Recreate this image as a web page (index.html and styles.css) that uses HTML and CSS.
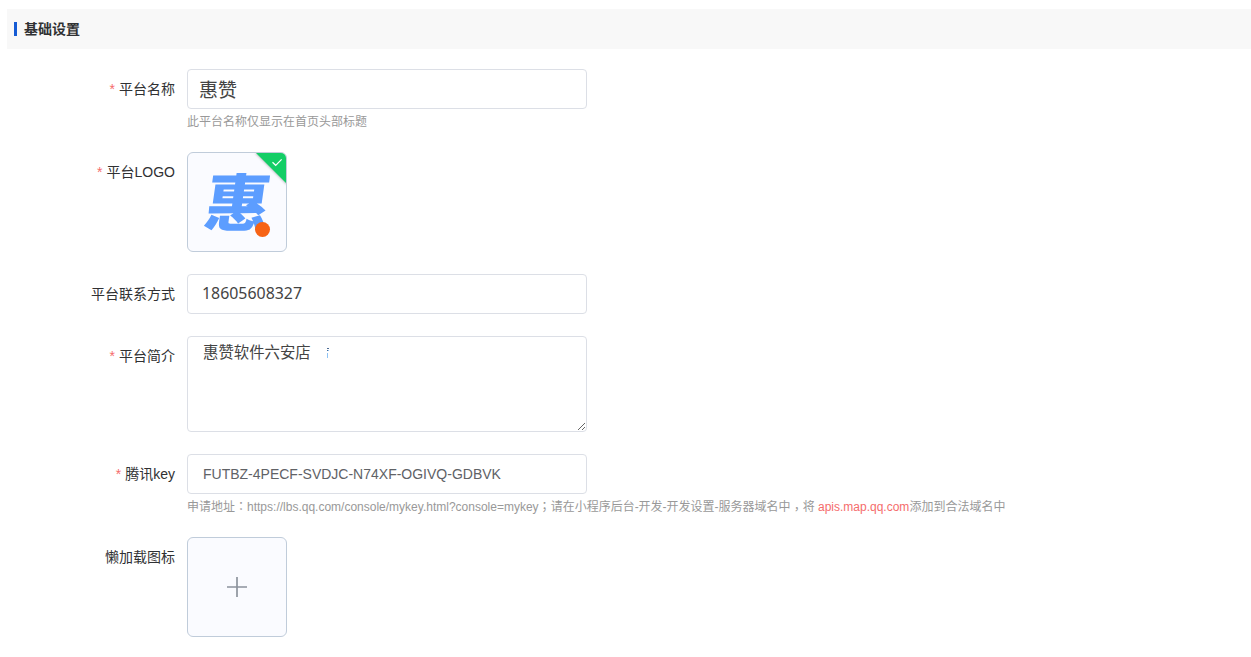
FILE: index.html
```html
<!DOCTYPE html>
<html lang="zh-CN">
<head>
    <meta charset="UTF-8">
    <meta name="viewport" content="width=device-width, initial-scale=1.0">
    <title>基础设置</title>
    <link rel="stylesheet" href="styles.css">
</head>
<body>
    <div class="section-title">基础设置</div>

    <form class="form">
        <div class="form-item required">
            <label class="label" for="name">平台名称</label>
            <div class="content">
                <input class="input input-name" id="name" type="text" value="惠赞">
                <div class="tip">此平台名称仅显示在首页头部标题</div>
            </div>
        </div>

        <div class="form-item required">
            <span class="label">平台LOGO</span>
            <div class="content">
                <div class="upload">
                    <span class="logo-text">惠</span>
                    <span class="logo-dot"></span>
                    <svg class="badge" width="32" height="32" viewBox="0 0 32 32">
                        <path d="M0 0h32v32z" fill="#13ce66"/>
                        <path d="M17.5 10.2l3.2 3.1 5.9-6" fill="none" stroke="#fff" stroke-width="1.2"/>
                    </svg>
                </div>
            </div>
        </div>

        <div class="form-item">
            <label class="label" for="phone">平台联系方式</label>
            <div class="content">
                <input class="input input-phone" id="phone" type="text" value="18605608327">
            </div>
        </div>

        <div class="form-item required">
            <label class="label" for="intro">平台简介</label>
            <div class="content">
                <div class="textarea-wrap">
                    <textarea class="textarea" id="intro">惠赞软件六安店</textarea>
                    <svg class="caret-mark" width="2" height="10" viewBox="0 0 2 10">
                        <path d="M0 0h2v1H0zM0 2h1v1H0z" fill="#4a6a94"/>
                        <path d="M1 2h1v1H1zM0 5h1v5H0z" fill="#8fc4f5"/>
                    </svg>
                </div>
            </div>
        </div>

        <div class="form-item required">
            <label class="label" for="key">腾讯key</label>
            <div class="content">
                <input class="input input-key" id="key" type="text" value="FUTBZ-4PECF-SVDJC-N74XF-OGIVQ-GDBVK">
                <div class="tip tip-key">申请地址<span class="punct" lang="zh-TW">：</span>https://lbs.qq.com/console/mykey.html?console=mykey<span class="punct" lang="zh-TW">；</span>请在小程序后台-开发-开发设置-服务器域名中<span class="punct comma" lang="zh-TW">，</span>将 <span class="danger">apis.map.qq.com</span>添加到合法域名中</div>
            </div>
        </div>

        <div class="form-item">
            <span class="label">懒加载图标</span>
            <div class="content">
                <div class="upload">
                    <svg class="plus" width="20" height="20" viewBox="0 0 20 20">
                        <path d="M0 10h20M10 0v20" stroke="#8c939d" stroke-width="1.7"/>
                    </svg>
                </div>
            </div>
        </div>
    </form>
</body>
</html>
```
FILE: styles.css
```css
* {
    box-sizing: border-box;
}
body {
    margin: 0;
    padding: 9px 0 0 7px;
    background: #fff;
    font-family: "Liberation Sans", "Noto Sans CJK SC", sans-serif;
    font-size: 14px;
    color: #303133;
    overflow: hidden;
}
.section-title {
    display: flex;
    align-items: center;
    height: 40px;
    padding-left: 7px;
    padding-bottom: 2px;
    background: #f8f8f8;
    font-weight: bold;
}
.section-title::before {
    content: "";
    width: 3px;
    height: 14px;
    margin-top: 2px;
    margin-right: 7px;
    background: #155bd4;
}
.form {
    display: flex;
    flex-direction: column;
    gap: 22px;
    padding-top: 20px;
}
.form-item {
    display: flex;
}
.label {
    width: 180px;
    padding-right: 12px;
    line-height: 40px;
    text-align: right;
}
.required .label::before {
    content: "*";
    margin-right: 4px;
    color: #f56c6c;
}
.content {
    flex: 1;
}
.input {
    display: block;
    width: 400px;
    height: 40px;
    padding: 0 15px;
    border: 1px solid #dcdfe6;
    border-radius: 4px;
    outline: none;
    background: #fff;
    font-family: inherit;
    font-size: 14px;
    color: #606266;
}
.input-name {
    padding-left: 11px;
    padding-bottom: 2px;
    font-size: 19px;
    color: #444;
}
.input-phone {
    padding-left: 14px;
    padding-bottom: 2px;
    font-family: "Noto Sans", sans-serif;
    font-size: 15.9px;
    color: #444;
}
.input-key {
    font-size: 14px;
}
.tip {
    height: 21px;
    padding-top: 1px;
    font-size: 12px;
    line-height: 24px;
    color: #999;
    white-space: nowrap;
}
.punct {
    font-family: "Noto Sans CJK TC", sans-serif;
    line-height: 1;
}
.comma {
    vertical-align: -3px;
}
.danger {
    color: #f56c6c;
}
.upload {
    position: relative;
    display: flex;
    align-items: center;
    justify-content: center;
    width: 100px;
    height: 100px;
    border: 1px solid #c0ccda;
    border-radius: 6px;
    background: #fafbff;
    overflow: hidden;
}
.logo-text {
    padding-left: 2px;
    padding-bottom: 6px;
    font-family: "Noto Sans CJK SC", sans-serif;
    font-size: 62px;
    font-weight: 900;
    line-height: 92px;
    color: #5c9dff;
    transform: skewX(-8deg) scaleX(1.05);
}
.logo-dot {
    position: absolute;
    left: 67px;
    top: 69px;
    width: 15px;
    height: 15px;
    border-radius: 50%;
    background: #f76315;
}
.badge {
    position: absolute;
    top: -1px;
    right: -1px;
    filter: drop-shadow(0 1px 1px rgba(0, 0, 0, 0.25));
}
.textarea-wrap {
    position: relative;
    width: 400px;
}
.textarea {
    display: block;
    width: 400px;
    height: 96px;
    padding: 4px 15px;
    border: 1px solid #dcdfe6;
    border-radius: 4px;
    outline: none;
    font-family: inherit;
    font-size: 15.4px;
    line-height: 23px;
    color: #444;
    resize: vertical;
}
.caret-mark {
    position: absolute;
    left: 140px;
    top: 12px;
}
```
